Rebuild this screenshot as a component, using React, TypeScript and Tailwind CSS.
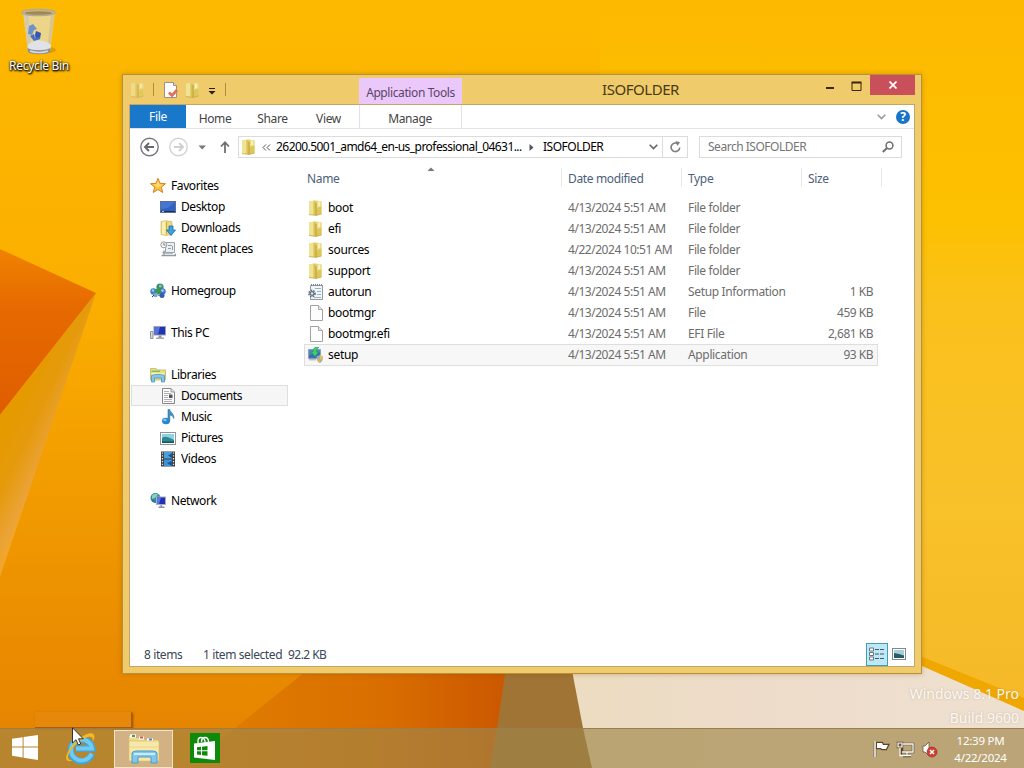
import type { ReactNode } from "react";

interface FileRow {
  name: string;
  icon: ReactNode;
  date: string;
  type: string;
  size?: string;
  selected?: boolean;
}

interface NavEntry {
  label: string;
  icon: ReactNode;
  nested?: boolean;
  selected?: boolean;
}

function Wallpaper() {
  return (
    <svg className="absolute inset-0" width="1024" height="768" viewBox="0 0 1024 768">
      <defs>
        <linearGradient id="base" x1="0" y1="0" x2="0" y2="1">
          <stop offset="0" stopColor="#fdb900" />
          <stop offset="0.4" stopColor="#fbae00" />
          <stop offset="0.62" stopColor="#f29d00" />
          <stop offset="0.85" stopColor="#ea8b00" />
          <stop offset="1" stopColor="#e58200" />
        </linearGradient>
        <linearGradient id="right" x1="0" y1="0" x2="0" y2="1">
          <stop offset="0" stopColor="#fdb900" />
          <stop offset="0.3" stopColor="#fdc100" />
          <stop offset="0.42" stopColor="#fac11c" />
          <stop offset="0.7" stopColor="#f9c12a" />
          <stop offset="1" stopColor="#f5b828" />
        </linearGradient>
        <linearGradient id="flap" x1="0" y1="0" x2="0" y2="1">
          <stop offset="0" stopColor="#f08200" />
          <stop offset="0.35" stopColor="#e66a00" />
          <stop offset="1" stopColor="#e05d00" />
        </linearGradient>
        <linearGradient id="fold" gradientUnits="userSpaceOnUse" x1="5" y1="430" x2="52" y2="452">
          <stop offset="0" stopColor="#e59a00" />
          <stop offset="0.45" stopColor="#e59a0c" />
          <stop offset="0.9" stopColor="#eba338" />
          <stop offset="1" stopColor="#f2a52c" />
        </linearGradient>
        <linearGradient id="shade" x1="0" y1="0" x2="1" y2="0">
          <stop offset="0" stopColor="#e17f00" />
          <stop offset="0.6" stopColor="#d96e00" />
          <stop offset="1" stopColor="#cb5700" />
        </linearGradient>
        <linearGradient id="sand" x1="0" y1="0" x2="1" y2="0">
          <stop offset="0" stopColor="#ecdcc0" />
          <stop offset="0.4" stopColor="#eedcca" />
          <stop offset="1" stopColor="#eee0d0" />
        </linearGradient>
      </defs>
      <rect width="1024" height="768" fill="url(#base)" />
      <rect x="600" width="424" height="728" fill="url(#right)" />
      <path d="M0 249 96 293 0 415Z" fill="url(#flap)" />
      <path d="M96 293 0 415V577Z" fill="url(#fold)" />
      <path d="M320 660 235 728 190 768H510V660Z" fill="url(#shade)" />
      <path d="M507 660 497 728 490 768H600V660Z" fill="#9f7434" />
      <path d="M570 660 583 728 592 768H1024V711L922 664 900 654Z" fill="url(#sand)" />
      <path d="M900 648 1024 698V711L922 666Z" fill="#efa800" />
    </svg>
  );
}

function FolderIcon({ className = "" }: { className?: string }) {
  return (
    <svg width="16" height="16" viewBox="0 0 16 16" className={className}>
      <path d="M1 1.500 7 .3 13.500 1.500V14L8 15.500 1 14.500Z" fill="#e6d673" />
      <path d="M1 1.500 5.500.800V14.500L1 14.300Z" fill="#efe394" />
      <path d="M5.500 1 7.500 1.500V15L5.500 14.500Z" fill="#d9c35a" />
      <path d="M7.500 2.500 8.800 3V15.300L7.500 15Z" fill="#c09c30" />
      <path d="M8.800 2.500 13.500 1.500V8L8.800 9.500Z" fill="#ebdf8c" />
      <path d="M10 1.500H12V6H10Z" fill="#f7f1c0" />
      <path d="M8.800 8 13.500 6.500V14L8.800 15.300Z" fill="#ddc75a" />
      <path d="M1 14.500 8 15.500 13.500 14" stroke="#c0a548" strokeWidth=".7" fill="none" />
    </svg>
  );
}

function PageIcon() {
  return (
    <svg width="16" height="16" viewBox="0 0 16 16">
      <path d="M2.500.5H10.500L14.500 4.500V15.500H2.500Z" fill="#fdfdfd" stroke="#a2a2a2" />
      <path d="M10.500.5V4.500H14.500" fill="#e6e6e6" stroke="#a8a8a8" />
    </svg>
  );
}

function InfIcon() {
  return (
    <svg width="16" height="16" viewBox="0 0 16 16">
      <path d="M2.500 1.500H14.500V15.500H2.500Z" fill="#f1f5f8" stroke="#8f9ba5" />
      <path d="M3 1H14" stroke="#7b8790" strokeDasharray="1 1" strokeWidth="2" />
      <path d="M7 4.500H13M9 7.500H13M9 10.500H13M6 13.500H13" stroke="#9cb2c4" />
      <circle cx="4" cy="9.500" r="3" fill="#cfd8df" stroke="#65727d" strokeWidth="1.800" strokeDasharray="1.500 1" />
      <circle cx="4" cy="9.500" r="1.800" fill="#dfe6eb" stroke="#53606b" />
    </svg>
  );
}

function SetupIcon() {
  return (
    <svg width="16" height="16" viewBox="0 0 16 16">
      <path d="M.5 2.500H12.500V11.500H.5Z" fill="#4f86c6" stroke="#8ea1b4" />
      <path d="M1 8 12 5V11H1Z" fill="#3a6db4" />
      <path d="M8.500 0C5.500.5 5 3 5 5H3.200L7 9.500 10.500 5H8.500C8.200 3 9 1.200 11 .5Z" fill="#3bd06c" stroke="#18a048" strokeWidth=".6" />
      <path d="M8.500 9.500 12 8 15 9.500C15 13 14 15 12 16 9.500 15 8.500 13 8.500 9.500Z" fill="#a5abb0" />
      <path d="M12 8 15 9.500C15 11 14.800 12 14.500 12.500H12Z" fill="#e4c45b" />
      <path d="M12 12.500V16C10.500 15.500 9.200 14 8.800 12.500Z" fill="#d7bc58" />
      <path d="M1 12.800H8" stroke="#9aa4ad" />
    </svg>
  );
}

function StarIcon() {
  return (
    <svg width="16" height="16" viewBox="0 0 16 16">
      <path
        d="M8 .3 10 5.300 15.500 5.700 11.300 9.100 12.700 14.500 8 11.500 3.300 14.500 4.700 9.100.5 5.700 6 5.300Z"
        fill="#fcc03c"
        stroke="#d9822a"
        strokeWidth="1"
      />
      <path d="M8 2.500 9.300 6.300 12.500 6.700 8 9.500 4 6.700 6.800 6.300Z" fill="#ffe070" />
    </svg>
  );
}

function DesktopIcon() {
  return (
    <svg width="16" height="16" viewBox="0 0 16 16">
      <rect x=".5" y="2.500" width="15" height="11" fill="#2f62c4" stroke="#5a6f96" />
      <path d="M1 3H15L8 9 1 10Z" fill="#4476d2" />
      <path d="M1 12.500H15" stroke="#1e2f5c" />
      <path d="M2 12.500H4" stroke="#a8d07c" />
    </svg>
  );
}

function DownloadsIcon() {
  return (
    <svg width="16" height="16" viewBox="0 0 16 16">
      <path d="M1 1.500 6 .8 12 1.500V14.500L6 15.500 1 14.500Z" fill="#ecd97c" stroke="#cdb050" strokeWidth=".6" />
      <path d="M2 2 5.500 1.500V14.500L2 14Z" fill="#f8efb4" />
      <path d="M6.500 2V14" stroke="#c9a848" />
      <path d="M9 6H13V10H15.500L11 15.500 6.500 10H9Z" fill="#3aa2e0" stroke="#1c6ca8" strokeWidth=".8" />
    </svg>
  );
}

function RecentIcon() {
  return (
    <svg width="16" height="16" viewBox="0 0 16 16">
      <path d="M6 1.500H14.500V11.500H5.500V5" fill="#eceff1" stroke="#9ba4aa" />
      <path d="M8 4.500H12M8 7.500H11M12.500 5V9" stroke="#8fa3b0" />
      <circle cx="3.800" cy="3.800" r="3" fill="#f6f6f6" stroke="#9a9a9a" />
      <path d="M3.800 2V4H5.500" stroke="#666" strokeWidth=".8" fill="none" />
      <path d="M4 9.500V14.500H15.500V12.500M1.500 14.500H14M2.500 11.500H5" stroke="#8f999f" strokeWidth="1.300" fill="none" />
      <path d="M5 12.500H13" stroke="#b8c0c5" />
    </svg>
  );
}

function HomegroupIcon() {
  return (
    <svg width="16" height="16" viewBox="0 0 16 16">
      <circle cx="3.500" cy="8.500" r="3.200" fill="#3d7fca" />
      <circle cx="10" cy="4" r="3.600" fill="#3c8a74" />
      <circle cx="12.500" cy="8.500" r="3.200" fill="#4577c8" />
      <circle cx="8" cy="8.500" r="3" fill="#379c45" />
      <circle cx="5.500" cy="12" r="2.300" fill="#7ba4dc" />
      <circle cx="12" cy="12.500" r="2.500" fill="#2f5fb4" />
      <circle cx="10.300" cy="3" r="1.500" fill="#8cc9a2" />
      <circle cx="12.500" cy="7.500" r="1.300" fill="#b4d0f2" />
      <circle cx="3" cy="7.500" r="1.200" fill="#9cc9ee" />
      <path d="M4 12 2 14M9 11.500V13" stroke="#173c84" />
    </svg>
  );
}

function ComputerIcon() {
  return (
    <svg width="16" height="16" viewBox="0 0 16 16">
      <path d="M.5 6.500H3V13.500H.5Z" fill="#d5dade" stroke="#8b949b" />
      <rect x="4" y="1.500" width="11.500" height="8.500" fill="#2232b4" stroke="#9aa4b2" />
      <path d="M4.500 2H10L8 9.500H4.500Z" fill="#5474dc" />
      <path d="M8.500 10.500H11.500V13H8.500Z" fill="#8b949b" />
      <path d="M6 13.200H14" stroke="#a0a8ae" strokeWidth="1.500" />
    </svg>
  );
}

function LibrariesIcon() {
  return (
    <svg width="16" height="16" viewBox="0 0 16 16">
      <path d="M.5 1.500H6L7 3H15.500V13H.5Z" fill="#efdf82" stroke="#c5b45c" strokeWidth=".8" />
      <path d="M1.500 3.500H10V5H1.500Z" fill="#74c26a" />
      <path d="M2 6H14V8H2Z" fill="#f7f0ba" />
      <path d="M1.500 8.500C5 7 11 7 14.500 8.500V15H11.500V11H4.500V15H1.500Z" fill="#83c8e8" stroke="#4695be" strokeWidth=".8" />
    </svg>
  );
}

function DocumentIcon() {
  return (
    <svg width="16" height="16" viewBox="0 0 16 16">
      <path d="M2.500.5H11L14.500 4V15.500H2.500Z" fill="#fafafa" stroke="#878787" />
      <path d="M11 .5V4H14.500" fill="#ddd" stroke="#999" />
      <path d="M4 3.500H9M4 5.500H11M4 7.500H8M4 9.500H8M4 11.500H12M4 13.500H12" stroke="#b0b0b0" />
      <rect x="9" y="6.500" width="3.500" height="3.500" fill="#4b5663" />
    </svg>
  );
}

function MusicIcon() {
  return (
    <svg width="16" height="16" viewBox="0 0 16 16">
      <path d="M8 .5H9.800C10 3.500 14.500 4.500 13.800 9.500 13 7 11.500 6 9.800 6V12H8Z" fill="#3c93c8" stroke="#25719f" strokeWidth=".6" />
      <ellipse cx="6" cy="12" rx="4" ry="3.300" fill="#2b86c8" />
      <ellipse cx="5" cy="11" rx="1.800" ry="1.300" fill="#7cc4ee" />
    </svg>
  );
}

function PicturesIcon() {
  return (
    <svg width="16" height="16" viewBox="0 0 16 16">
      <rect x=".5" y="2.500" width="15" height="12" fill="#fff" stroke="#8b959b" />
      <rect x="2" y="4" width="12" height="9" fill="#8fd0e6" />
      <path d="M2 8C5 5.500 9 7.500 14 10V13H2Z" fill="#2c8a8a" />
      <path d="M2 11.500H14V13H2Z" fill="#1d4e66" />
    </svg>
  );
}

function VideosIcon() {
  return (
    <svg width="16" height="16" viewBox="0 0 16 16">
      <rect x="1" y=".5" width="14" height="15" fill="#3d3f42" />
      <rect x="4" y="1" width="8" height="6.500" fill="#4aa0dc" />
      <rect x="4" y="8.500" width="8" height="6.500" fill="#3c93d6" />
      <path d="M12 2 8 4.500 12 7ZM12 10 7 12 12 15Z" fill="#1e5590" />
      <path d="M2.500 1.500V15M13.500 1.500V15" stroke="#e8e8e8" strokeWidth="1.200" strokeDasharray="1.300 1.500" />
    </svg>
  );
}

function NetworkIcon() {
  return (
    <svg width="16" height="16" viewBox="0 0 16 16">
      <circle cx="5.500" cy="5" r="5" fill="#3583bc" />
      <path d="M2 2.500C4 .5 7 0 8 1.500L5 5 2 6Z" fill="#8ed49c" />
      <path d="M1.500 6 4 8 6 10 2.500 8.500Z" fill="#2d6e54" />
      <rect x="6.500" y="4" width="9" height="7.500" fill="#2430b8" stroke="#a5b0c5" />
      <path d="M7 4.500H11L9 11H7Z" fill="#5a78de" />
      <path d="M10.500 12H12V13.500H14.500V15H8.500V13.500H10.500Z" fill="#8c939c" />
    </svg>
  );
}

const navEntries: (NavEntry | null)[] = [
  { label: "Favorites", icon: <StarIcon /> },
  { label: "Desktop", icon: <DesktopIcon />, nested: true },
  { label: "Downloads", icon: <DownloadsIcon />, nested: true },
  { label: "Recent places", icon: <RecentIcon />, nested: true },
  null,
  { label: "Homegroup", icon: <HomegroupIcon /> },
  null,
  { label: "This PC", icon: <ComputerIcon /> },
  null,
  { label: "Libraries", icon: <LibrariesIcon /> },
  { label: "Documents", icon: <DocumentIcon />, nested: true, selected: true },
  { label: "Music", icon: <MusicIcon />, nested: true },
  { label: "Pictures", icon: <PicturesIcon />, nested: true },
  { label: "Videos", icon: <VideosIcon />, nested: true },
  null,
  { label: "Network", icon: <NetworkIcon /> },
];

const files: FileRow[] = [
  { name: "boot", icon: <FolderIcon />, date: "4/13/2024 5:51 AM", type: "File folder" },
  { name: "efi", icon: <FolderIcon />, date: "4/13/2024 5:51 AM", type: "File folder" },
  { name: "sources", icon: <FolderIcon />, date: "4/22/2024 10:51 AM", type: "File folder" },
  { name: "support", icon: <FolderIcon />, date: "4/13/2024 5:51 AM", type: "File folder" },
  { name: "autorun", icon: <InfIcon />, date: "4/13/2024 5:51 AM", type: "Setup Information", size: "1 KB" },
  { name: "bootmgr", icon: <PageIcon />, date: "4/13/2024 5:51 AM", type: "File", size: "459 KB" },
  { name: "bootmgr.efi", icon: <PageIcon />, date: "4/13/2024 5:51 AM", type: "EFI File", size: "2,681 KB" },
  { name: "setup", icon: <SetupIcon />, date: "4/13/2024 5:51 AM", type: "Application", size: "93 KB", selected: true },
];

function TitleBar() {
  return (
    <div className="flex h-[29px] items-start text-[#4a3a14]">
      <div className="flex h-[29px] w-[230px] items-center pl-[1px]">
        <FolderIcon className="opacity-70" />
        <span className="ml-[7px] h-[13px] w-px bg-[#b88a3c]" />
        <svg className="ml-[9px]" width="16" height="16" viewBox="0 0 16 16">
          <path d="M1.500.5H10.500L13.500 3.500V15.500H1.500Z" fill="#fdfcfa" stroke="#a08f80" />
          <path d="M10.500.5V3.500H13.500" fill="#e8e0d8" stroke="#a08f80" />
          <path d="M6 10.500 9 13.500 14 8" fill="none" stroke="#e0705c" strokeWidth="2.800" />
        </svg>
        <FolderIcon className="ml-[6px]" />
        <svg className="ml-[7px] mt-[3px]" width="8" height="7" viewBox="0 0 8 7">
          <path d="M1 .5H7" stroke="#2c1c10" />
          <path d="M.5 3H7.500L4 6.500Z" fill="#2c1c10" />
        </svg>
        <span className="ml-[9px] h-[13px] w-px bg-[#b88a3c]" />
      </div>
      <div className="mt-[3px] flex h-[26px] w-[103px] items-center justify-center bg-[#ebc8fa] pt-[3px] text-[12px] tracking-[-0.4px] text-[#5c4468]">
        Application Tools
      </div>
      <div className="flex h-[29px] w-[357px] items-center justify-center text-[15px] tracking-[-0.45px]">
        ISOFOLDER
      </div>
      <div className="flex w-[51px] shrink-0">
        <svg width="51" height="20" viewBox="0 0 51 20">
          <path d="M7 13H15" stroke="#38250c" strokeWidth="2" />
          <path d="M33 8V15.500H42V8" fill="none" stroke="#38250c" />
          <path d="M32.500 7.500H42.500" stroke="#38250c" strokeWidth="2" />
        </svg>
      </div>
      <div className="flex h-5 w-[45px] shrink-0 items-center justify-center bg-[#c9505a]">
        <svg width="8" height="8" viewBox="0 0 8 8">
          <path d="M.5 .5 7.500 7.500M7.500.5.500 7.500" stroke="#fff" strokeWidth="1.700" />
        </svg>
      </div>
    </div>
  );
}

function RibbonTabs() {
  return (
    <div className="flex h-6 border-b border-[#e3e3e5] text-[12px] text-[#444]">
      <div className="flex w-14 items-center justify-center bg-[#1a78ca] text-white">File</div>
      <div className="flex w-[58px] items-center justify-center pt-1">Home</div>
      <div className="flex w-[57px] items-center justify-center pt-1">Share</div>
      <div className="flex w-[55px] items-center justify-center pt-1">View</div>
      <div className="ml-[3px] flex w-[103px] items-center justify-center border-x border-[#e6dcea] pt-1 pr-px tracking-[-0.4px]">
        Manage
      </div>
      <div className="flex flex-1 items-center justify-end gap-[10px] pr-1">
        <svg width="9" height="6" viewBox="0 0 9 6">
          <path d="M.7.700 4.500 4.500 8.300.700" fill="none" stroke="#9a9a9a" strokeWidth="1.600" />
        </svg>
        <span className="flex size-[14px] items-center justify-center rounded-full bg-[#1874c8] text-[12px] font-bold text-white">?</span>
      </div>
    </div>
  );
}

function AddressRow() {
  return (
    <div className="flex h-9 items-center pl-[10px] text-[12px]">
      <svg width="92" height="20" viewBox="0 0 92 20">
        <circle cx="9.500" cy="10" r="8.700" fill="none" stroke="#77797c" strokeWidth="1.400" />
        <path d="M14 10H5.500M9 6 5 10 9 14" fill="none" stroke="#66686c" strokeWidth="1.900" />
        <circle cx="38.500" cy="10" r="8.700" fill="none" stroke="#d4d4d6" strokeWidth="1.400" />
        <path d="M34 10H42.500M39 6 43 10 39 14" fill="none" stroke="#d0d0d2" strokeWidth="1.900" />
        <path d="M58.500 8.500H66L62.200 12.500Z" fill="#75777a" />
        <path d="M85 16V6M81 9.500 85 5.300 89 9.500" fill="none" stroke="#6e7074" strokeWidth="1.800" />
      </svg>
      <div className="ml-[6px] flex h-[22px] w-[450px] items-center border border-[#dcdcde]">
        <FolderIcon className="ml-[2px] shrink-0" />
        <svg className="ml-[5px] mt-px shrink-0" width="9" height="7" viewBox="0 0 9 7">
          <path d="M4 .5 1 3.500 4 6.500M8 .5 5 3.500 8 6.500" fill="none" stroke="#555" />
        </svg>
        <span className="ml-[5px] w-[247px] shrink-0 whitespace-nowrap tracking-[-0.55px]">
          26200.5001_amd64_en-us_professional_04631...
        </span>
        <svg className="ml-[6px] shrink-0" width="5" height="7" viewBox="0 0 5 7">
          <path d="M.5 0 4.500 3.500.5 7Z" fill="#555" />
        </svg>
        <span className="ml-[9px] w-[106px] shrink-0 tracking-[-0.5px]">ISOFOLDER</span>
        <svg className="shrink-0" width="9" height="6" viewBox="0 0 9 6">
          <path d="M.7.700 4.500 4.500 8.300.700" fill="none" stroke="#666" strokeWidth="1.600" />
        </svg>
        <span className="ml-[4px] flex h-5 flex-1 items-center justify-center border-l border-[#dcdcde]">
          <svg width="11" height="12" viewBox="0 0 11 12">
            <path d="M7.500 2.600A4.300 4.300 0 1 0 9.700 6.500" fill="none" stroke="#7b7d80" strokeWidth="1.600" />
            <path d="M5.500 0 10 1.200 7.500 5Z" fill="#7b7d80" />
          </svg>
        </span>
      </div>
      <div className="ml-[11px] flex h-[22px] w-[203px] items-center justify-between border border-[#dcdcde] px-2 text-[#757575]">
        <span className="tracking-[-0.48px]">Search ISOFOLDER</span>
        <svg className="mr-[-1px]" width="12" height="12" viewBox="0 0 12 12">
          <circle cx="7.500" cy="4.500" r="3.400" fill="none" stroke="#6d6f72" strokeWidth="1.500" />
          <path d="M5 7 .8 11" stroke="#6d6f72" strokeWidth="2" />
        </svg>
      </div>
    </div>
  );
}

function NavPane() {
  return (
    <nav className="w-[174px] pt-[10px]">
      {navEntries.map((entry, i) =>
        entry === null ? (
          <div key={i} className="h-[21px]" />
        ) : (
          <div
            key={entry.label}
            className={`ml-px flex h-[21px] w-[157px] items-center border ${entry.nested ? "pl-[28px]" : "pl-[18px]"} ${
              entry.selected ? "border-[#dedede] bg-[#f6f6f6]" : "border-transparent"
            }`}
          >
            {entry.icon}
            <span className="ml-[5px] pt-px tracking-[-0.4px]">{entry.label}</span>
          </div>
        ),
      )}
    </nav>
  );
}

function FileList() {
  return (
    <div className="w-[578px] pt-[3px]">
      <div className="flex h-[19px] items-center text-[#4c607a]">
        <div className="relative flex h-full w-[258px] items-center border-r border-[#e8e8e8] pl-[3px] pt-[3px]">
          Name
          <svg className="absolute left-[123px] top-[-1px]" width="8" height="5" viewBox="0 0 8 5">
            <path d="M.5 4 4 .5 7.500 4Z" fill="#777" />
          </svg>
        </div>
        <div className="flex h-full w-[120px] items-center border-r border-[#e8e8e8] pl-[6px] pt-[3px]">Date modified</div>
        <div className="flex h-full w-[120px] items-center border-r border-[#e8e8e8] pl-[6px] pt-[3px]">Type</div>
        <div className="flex h-full w-[80px] items-center border-r border-[#e8e8e8] pl-[6px] pt-[3px]">Size</div>
      </div>
      <div className="mt-[10px]">
        {files.map((file) => (
          <div
            key={file.name}
            className={`flex w-[574px] items-center whitespace-nowrap border text-[#6d6d6d] ${
              file.selected ? "h-[22px] border-[#dedede] bg-[#f7f7f7] pb-px" : "h-[21px] border-transparent"
            }`}
          >
            <div className="flex w-[263px] items-center pl-[3px] text-black">
              {file.icon}
              <span className="ml-1 pt-px tracking-[-0.3px]">{file.name}</span>
            </div>
            <div className="w-[120px] pt-px tracking-[-0.46px]">{file.date}</div>
            <div className="w-[110px] pt-px">{file.type}</div>
            <div className="w-[75px] pt-px text-right tracking-[-0.5px]">{file.size}</div>
          </div>
        ))}
      </div>
    </div>
  );
}

function StatusBar() {
  return (
    <div className="flex h-6 items-center pl-[14px] text-[#3a4658]">
      <span className="w-[59px] pt-0.5 tracking-[-0.4px]">8 items</span>
      <span className="w-[85px] whitespace-nowrap pt-0.5 tracking-[-0.4px]">1 item selected</span>
      <span className="pt-0.5 tracking-[-0.55px]">92.2 KB</span>
      <div className="ml-auto flex items-center pr-2">
        <span className="flex h-[23px] w-[22px] items-center justify-center border border-[#3fa0b4] bg-[#bfe8f6]">
          <svg width="16" height="14" viewBox="0 0 16 14">
            <path d="M.5 1H4.500V4H.5ZM.5 5.500H4.500V8.500H.5ZM.5 10H4.500V13H.5Z" fill="#fff" stroke="#6a7784" />
            <path d="M6 2.500H15.500M6 7H15.500M6 11.500H15.500" stroke="#405a68" strokeDasharray="4 1" />
          </svg>
        </span>
        <svg className="ml-[4px]" width="14" height="12" viewBox="0 0 14 12">
          <rect x=".5" y=".5" width="13" height="11" fill="#fff" stroke="#7d8990" />
          <rect x="2" y="2" width="10" height="8" fill="#a4d0dc" />
          <path d="M2 5 7 6 12 7.500V10H2Z" fill="#2c5c60" />
        </svg>
      </div>
    </div>
  );
}

function ExplorerWindow() {
  return (
    <div className="absolute left-[122px] top-[74px] h-[600px] w-[800px] border border-[#b8903a] bg-[#efcb6b] tracking-[-0.35px] shadow-[0_0_5px_rgba(120,80,0,0.35)]">
      <div className="pl-[6px]">
        <TitleBar />
      </div>
      <div className="mx-[6px] flex h-[563px] flex-col border border-[#c3a66a] bg-white text-[12px]">
        <RibbonTabs />
        <AddressRow />
        <div className="flex h-[477px]">
          <NavPane />
          <FileList />
        </div>
        <StatusBar />
      </div>
    </div>
  );
}

function RecycleBin() {
  return (
    <div className="absolute left-[4px] top-[8px] flex w-[70px] flex-col items-center">
      <svg width="40" height="48" viewBox="0 0 40 48">
        <ellipse cx="25" cy="42" rx="12" ry="3.500" fill="#a87400" opacity=".4" />
        <path d="M4 4H36L31 43C28 46 12 46 9 43Z" fill="#ecd588" />
        <path d="M5 6H9.500L12.500 44 9 43Z" fill="#cfc9b6" />
        <path d="M32 6H35.500L31 43 28 44Z" fill="#d8c48c" />
        <path d="M9 37C14 31 26 31 32 37L31 42H9.500Z" fill="#dfe3e8" />
        <path d="M8.500 40C14 43 26 43 31.300 40V44C27 47 12 47 9 44Z" fill="#8f9098" />
        <path d="M11 43C16 45 24 45 29 43" fill="none" stroke="#d8dade" strokeWidth="1.500" />
        <ellipse cx="19.500" cy="4.500" rx="16.500" ry="3" fill="#d0b878" stroke="#b3aa9c" strokeWidth="1.500" />
        <ellipse cx="19.500" cy="5" rx="13.500" ry="1.700" fill="#a08850" />
        <path d="M10 18 14 16 18 21 15 22 13 27 9 26Z" fill="#6f92cc" />
        <path d="M17 23 22 25 21 31 17 32 16 27Z" fill="#2f57b5" />
        <path d="M11 28 15 26 16 30 21 29 21 31 15 33Z" fill="#4670c8" />
      </svg>
      <span className="mt-px whitespace-nowrap text-[12px] leading-[17px] tracking-[-0.3px] text-white [text-shadow:0_1px_2px_#000,1px_1px_2px_#000,0_0_2px_rgba(0,0,0,0.7)]">
        Recycle Bin
      </span>
    </div>
  );
}

function Taskbar() {
  return (
    <div className="absolute inset-x-0 bottom-0 flex h-10 items-center border-t border-[#9b7c4c] bg-[#a08548]/65">
      <svg className="mb-0.5 ml-[12px]" width="26" height="25" viewBox="0 0 27 26">
        <path d="M0 4 11 2.300V12H0ZM12 2.100 27 0V12H12ZM0 13H11V23.300L0 21.700ZM12 13H27V26L12 23.600Z" fill="#fff" />
      </svg>
      <svg className="mb-0.5 ml-[26px]" width="34" height="34" viewBox="0 0 34 34">
        <path d="M28 22.500A10.800 10.800 0 1 1 28.300 17.500H12" fill="none" stroke="#3fa6de" strokeWidth="6.500" />
        <path d="M27.500 22.500A10.500 10.500 0 1 1 28 17.500H12" fill="none" stroke="#6fcbf2" strokeWidth="4" />
        <path
          d="M7 30C0 31 1 24 7 16 15 5 28-1 30 4 31 6 30 9 28.500 11 29.500 7 28 5 24 6 16 8 6 18 4 25 3.500 28 5 29.500 8 29Z"
          fill="#f3ba24"
        />
      </svg>
      <div className="ml-4 flex h-[38px] w-[59px] items-center justify-center border border-[#f3e3c4] bg-[#d2b285]">
        <svg width="34" height="32" viewBox="0 0 34 32">
          <path d="M2 3H8L9 5H15L16 7H31V28H2Z" fill="#efd98c" />
          <path d="M3 3H9M12 5H17M20 7H26" stroke="#fff" strokeWidth="3" />
          <path d="M5 3H8" stroke="#4a9c4c" strokeWidth="2" />
          <path d="M13 4.500H16" stroke="#d65640" strokeWidth="2" />
          <path d="M22 6.500H25" stroke="#428cc4" strokeWidth="2" />
          <path d="M2 8H32V28H2Z" fill="#f7e8a9" stroke="#d9bd68" strokeWidth=".7" />
          <path d="M2 14H32M2 20H32" stroke="#ecd68a" />
          <path d="M5 30V21Q5 18 9 18H26Q30 18 30 21V30H24V24H11V30Z" fill="#83c6ec" stroke="#4b9ccb" />
          <path d="M7 21H28" stroke="#c6ebfb" strokeWidth="2" fill="none" />
        </svg>
      </div>
      <svg className="mb-0.5 ml-[17px]" width="30" height="30" viewBox="0 0 30 30">
        <rect width="30" height="30" fill="#0d8a0c" />
        <path d="M4 10.500 25 8V27L4 24.500Z" fill="#fff" />
        <path d="M8 10V8Q8 4.500 11 4.500T15 8V9.500M11.500 9Q11.500 4.500 15 4.500T18.500 9" fill="none" stroke="#fff" strokeWidth="1.300" />
        <path d="M7 14.300 11 13.800V17.300H7ZM12 13.700 17.500 13V17.300H12ZM7 18.300H11V22L7 21.500ZM12 18.300H17.500V22.800L12 22.200Z" fill="#0d8a0c" />
      </svg>
      <div className="ml-auto flex items-center pr-[16px]">
        <svg width="66" height="18" viewBox="0 0 66 18">
          <g stroke="#594528" strokeWidth="2.500" fill="#594528">
            <path d="M3 2V17M5 3H10L11 5H16L14 9H10L9 8H5Z" />
            <path d="M30 4H41V12H30ZM35 12V15M31 16H39M29 4V16M26 3H30V7H26Z" fill="none" />
          </g>
          <path d="M3 1.500V17" stroke="#fff" strokeWidth="1.500" />
          <path d="M5 3H10L11 5H16L14 9H10L9 8H5Z" fill="#fff" />
          <path d="M31 4H41V12H30M35 12V15M31 15.500H39M28 8V15.500H31" fill="none" stroke="#fff" strokeWidth="1.300" />
          <path d="M26 3H30V7H26Z" fill="#6e5a38" stroke="#fff" strokeWidth="1.200" />
          <path d="M51 6H53L57 2V16L53 12H51Z" fill="#fff" stroke="#594528" strokeWidth=".7" />
          <circle cx="60" cy="12" r="5" fill="#d23e36" stroke="#8c2a20" strokeWidth=".6" />
          <path d="M58 10 62 14M62 10 58 14" stroke="#fff" strokeWidth="1.500" />
        </svg>
        <div className="ml-[15px] flex w-[55px] flex-col items-center whitespace-nowrap text-[11.500px] leading-[17px] tracking-[-0.25px] text-white">
          <span>12:39 PM</span>
          <span>4/22/2024</span>
        </div>
      </div>
    </div>
  );
}

export default function App() {
  return (
    <main className="relative h-[768px] w-[1024px] overflow-hidden font-['Noto_Sans','Open_Sans',sans-serif] text-[12px]">
      <Wallpaper />
      <RecycleBin />
      <ExplorerWindow />
      <div className="absolute right-[5px] top-[682px] text-right text-[14px] leading-6 text-white/90 [text-shadow:0_0_2px_rgba(160,130,90,0.5)]">
        <p>Windows 8.1 Pro</p>
        <p>Build 9600</p>
      </div>
      <div className="absolute left-[35px] top-[712px] h-4 w-[97px] border-b border-r border-[#a85c10] bg-[#e68a10]/60 shadow-[1px_1px_2px_rgba(90,40,0,0.6)]" />
      <Taskbar />
      <svg className="absolute left-[72px] top-[727px]" width="12" height="19" viewBox="0 0 12 19">
        <path d="M.5.800V16L4 12.700 6.300 18 8.700 17 6.500 11.800H11.300Z" fill="#fff" stroke="#222" strokeWidth=".9" />
      </svg>
    </main>
  );
}
